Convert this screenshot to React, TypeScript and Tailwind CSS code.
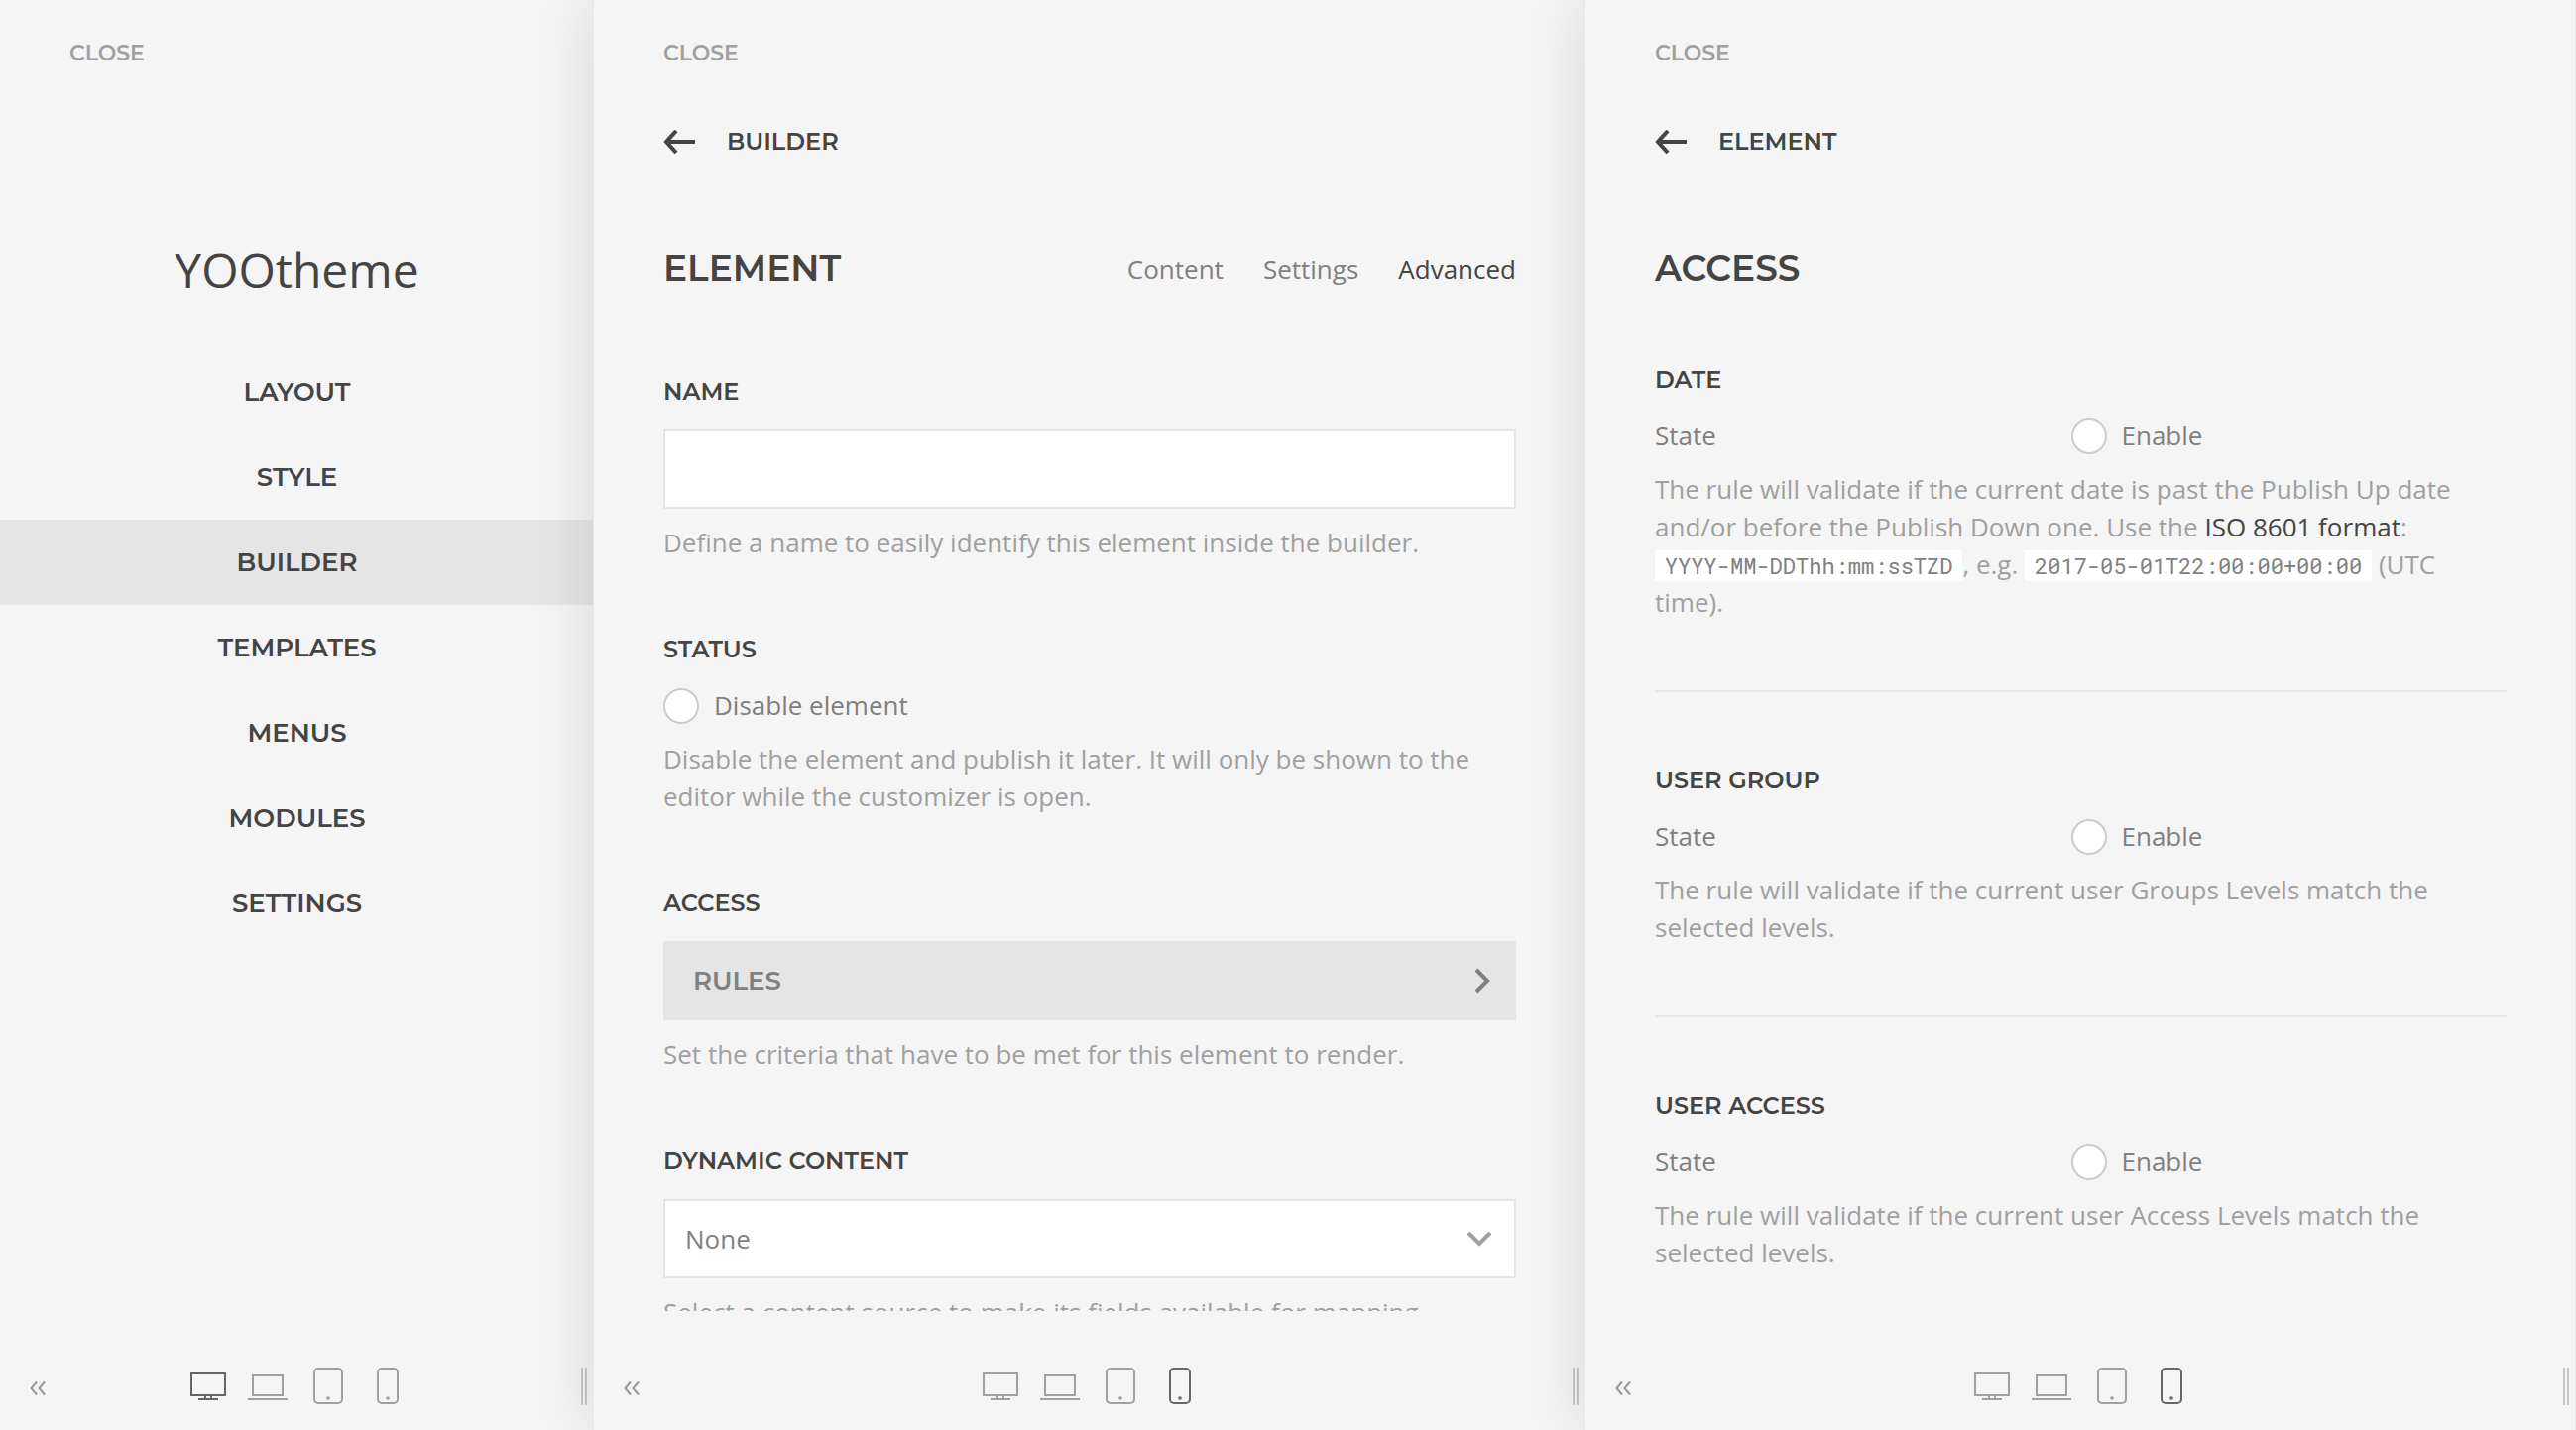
import type { ReactNode } from "react";

const heading = "font-['Montserrat','Inter',sans-serif] font-semibold uppercase";

const menu = ["Layout", "Style", "Builder", "Templates", "Menus", "Modules", "Settings"];

const devices: { name: string; drawing: ReactNode }[] = [
  {
    name: "Desktop",
    drawing: (
      <>
        <rect x="3" y="8" width="34" height="22" />
        <path d="M10 34h20M17 30v4M23 30v4" />
      </>
    ),
  },
  {
    name: "Laptop",
    drawing: (
      <>
        <rect x="5" y="10" width="30" height="20" />
        <path d="M0 34h40" />
      </>
    ),
  },
  {
    name: "Tablet",
    drawing: (
      <>
        <rect x="7" y="3" width="28" height="35" rx="4" />
        <circle cx="21" cy="33" r="1.8" fill="currentColor" stroke="none" />
      </>
    ),
  },
  {
    name: "Phone",
    drawing: (
      <>
        <rect x="11" y="3" width="20" height="35" rx="4" />
        <circle cx="21" cy="33" r="1.8" fill="currentColor" stroke="none" />
      </>
    ),
  },
];

function Footer({ active }: { active: string }) {
  return (
    <footer className="grid h-[120px] shrink-0 grid-cols-[1fr_auto_1fr] items-end pb-[25px]">
      <div className="flex pl-7">
        <button type="button" aria-label="Hide sidebar" className="text-[#999]">
          <svg viewBox="0 0 20 40" className="h-10 w-5" fill="none" stroke="currentColor" strokeWidth="2">
            <path d="M9 16.5l-5.5 6.5 5.5 6.5M17 16.5l-5.5 6.5 5.5 6.5" />
          </svg>
        </button>
      </div>
      <div className="flex gap-5">
        {devices.map((d) => (
          <button
            key={d.name}
            type="button"
            aria-label={d.name}
            className={d.name === active ? "text-[#666]" : "text-[#a0a0a0]"}
          >
            <svg viewBox="0 0 40 40" className="size-10" fill="none" stroke="currentColor" strokeWidth="2">
              {d.drawing}
            </svg>
          </button>
        ))}
      </div>
      <div className="flex justify-end pr-[7px]">
        <div className="h-[38px] w-[6px] border-x-2 border-[#c8c8c8]" />
      </div>
    </footer>
  );
}

function Panel({ active, children, raised }: { active: string; children: ReactNode; raised?: boolean }) {
  return (
    <section
      className={
        raised
          ? "relative flex min-h-0 min-w-0 flex-col bg-[#f5f5f5] shadow-[inset_-1px_0_0_#e9e9e9,0_0_0_1px_#e9e9e9,0_0_60px_rgba(0,0,0,0.13)]"
          : "flex min-h-0 min-w-0 flex-col bg-[#f5f5f5]"
      }
    >
      <div className="min-h-0 flex-1 overflow-hidden">{children}</div>
      <Footer active={active} />
    </section>
  );
}

function Close() {
  return (
    <div className="px-[70px] pt-[35px]">
      <button type="button" className={`${heading} block text-[22px] leading-[38px] text-[#a0a0a0]`}>
        Close
      </button>
    </div>
  );
}

function Back({ label }: { label: string }) {
  return (
    <button
      type="button"
      className={`${heading} mt-[51px] flex items-center gap-8 text-[24px] leading-[38px] text-[#444]`}
    >
      <svg viewBox="0 0 32 24" className="h-6 w-8" fill="none" stroke="currentColor" strokeWidth="4">
        <path d="M13 1L3 12l10 11M3 12h29" />
      </svg>
      {label}
    </button>
  );
}

function Title({ children }: { children: ReactNode }) {
  return <h1 className={`${heading} text-[36px] leading-[48px] text-[#444]`}>{children}</h1>;
}

function Label({ children, htmlFor }: { children: ReactNode; htmlFor?: string }) {
  const style = `${heading} block text-[24px] leading-[38px] text-[#444]`;
  return htmlFor ? (
    <label htmlFor={htmlFor} className={style}>
      {children}
    </label>
  ) : (
    <h2 className={style}>{children}</h2>
  );
}

function Help({ children }: { children: ReactNode }) {
  return <p className="mt-[15px] text-[26px] leading-[38px] text-[#a0a0a0]">{children}</p>;
}

function Check({ children }: { children: ReactNode }) {
  return (
    <label className="flex h-[38px] gap-[15px] text-[26px] leading-[36px] text-[#808080]">
      <input
        type="checkbox"
        className="size-9 appearance-none self-center rounded-full border-2 border-[#ccc] bg-white checked:bg-[#444]"
      />
      {children}
    </label>
  );
}

function Rule({ title, children }: { title: string; children: ReactNode }) {
  return (
    <section className="border-b-2 border-[#e5e5e5] py-[70px] first:pt-0 last:border-b-0">
      <Label>{title}</Label>
      <div className="mt-[19px] grid grid-cols-[420fr_440fr]">
        <span className="text-[26px] leading-[36px] text-[#808080]">State</span>
        <Check>Enable</Check>
      </div>
      <Help>{children}</Help>
    </section>
  );
}

function Code({ children }: { children: ReactNode }) {
  return (
    <code className="bg-white px-[10px] py-px font-['Roboto_Mono','DejaVu_Sans_Mono',monospace] text-[22px] leading-[26px] whitespace-nowrap text-[#808080]">
      {children}
    </code>
  );
}

export default function App() {
  return (
    <main className="grid h-screen grid-cols-[599fr_1000fr_999fr] grid-rows-1 overflow-hidden bg-[#f5f5f5] font-['Open_Sans',sans-serif]">
      <Panel active="Desktop">
        <Close />
        <div className="mt-[169px] text-center text-[48px] leading-[60px] text-[#444]">YOOtheme</div>
        <nav className="mt-[50px]">
          {menu.map((item) => (
            <a
              key={item}
              href={`#${item.toLowerCase()}`}
              className={`${heading} block text-center text-[26px] leading-[86px] text-[#444] ${
                item === "Builder" ? "bg-[#e5e5e5]" : ""
              }`}
            >
              {item}
            </a>
          ))}
        </nav>
      </Panel>

      <Panel active="Phone" raised>
        <Close />
        <div className="px-[70px]">
          <Back label="Builder" />
          <div className="mt-[84px] flex items-start justify-between">
            <Title>Element</Title>
            <nav className="flex gap-10 text-[26px] leading-[50px] text-[#808080]">
              <a href="#content">Content</a>
              <a href="#settings">Settings</a>
              <a href="#advanced" className="text-[#444]">
                Advanced
              </a>
            </nav>
          </div>

          <form className="mt-20 flex flex-col gap-[70px]">
            <div>
              <Label htmlFor="name">Name</Label>
              <input
                id="name"
                type="text"
                className="mt-[19px] block h-20 w-full border-2 border-[#e5e5e5] bg-white px-5 text-[26px] text-[#808080]"
              />
              <Help>Define a name to easily identify this element inside the builder.</Help>
            </div>
            <div>
              <Label>Status</Label>
              <div className="mt-[19px]">
                <Check>Disable element</Check>
              </div>
              <Help>
                Disable the element and publish it later. It will only be shown to the editor while the customizer is
                open.
              </Help>
            </div>
            <div>
              <Label>Access</Label>
              <button
                type="button"
                className={`${heading} mt-[19px] flex h-20 w-full items-center justify-between bg-[#e5e5e5] pr-[26px] pl-[30px] text-[26px] text-[#808080]`}
              >
                Rules
                <svg viewBox="0 0 16 26" className="h-[26px] w-4" fill="none" stroke="currentColor" strokeWidth="4">
                  <path d="M2 2l11 11L2 24" />
                </svg>
              </button>
              <Help>Set the criteria that have to be met for this element to render.</Help>
            </div>
            <div>
              <Label htmlFor="source">Dynamic Content</Label>
              <div className="relative mt-[19px]">
                <select
                  id="source"
                  className="block h-20 w-full appearance-none border-2 border-[#e5e5e5] bg-white px-5 text-[26px] text-[#808080]"
                >
                  <option>None</option>
                </select>
                <svg
                  viewBox="0 0 26 16"
                  className="pointer-events-none absolute top-8 right-6 h-4 w-[26px] text-[#a0a0a0]"
                  fill="none"
                  stroke="currentColor"
                  strokeWidth="4"
                >
                  <path d="M2 2l11 11L24 2" />
                </svg>
              </div>
              <Help>Select a content source to make its fields available for mapping.</Help>
            </div>
          </form>
        </div>
      </Panel>

      <Panel active="Phone" raised>
        <Close />
        <div className="px-[70px]">
          <Back label="Element" />
          <div className="mt-[84px]">
            <Title>Access</Title>
          </div>
          <div className="mt-[70px]">
            <Rule title="Date">
              The rule will validate if the current date is past the Publish Up date and/or before the Publish Down
              one. Use the{" "}
              <a href="#iso-8601" className="text-[#444]">
                ISO 8601 format
              </a>
              : <Code>YYYY-MM-DDThh:mm:ssTZD</Code>, e.g. <Code>2017-05-01T22:00:00+00:00</Code> (UTC time).
            </Rule>
            <Rule title="User Group">
              The rule will validate if the current user Groups Levels match the selected levels.
            </Rule>
            <Rule title="User Access">
              The rule will validate if the current user Access Levels match the selected levels.
            </Rule>
          </div>
        </div>
      </Panel>
    </main>
  );
}
